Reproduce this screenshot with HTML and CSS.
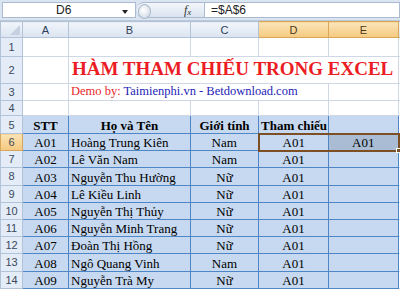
FILE: index.html
```html
<!DOCTYPE html>
<html lang="vi">
<head>
  <meta charset="UTF-8">
  <title>Hàm tham chiếu trong Excel</title>
  <link rel="stylesheet" href="styles.css">
</head>
<body>
  <div class="formula-bar">
    <div class="name-box">
      <span class="cell-ref">D6</span>
      <span class="arrow"></span>
    </div>
    <div class="splitter"><span class="knob"></span></div>
    <div class="fx"><i>f</i><span>x</span></div>
    <div class="formula">=$A$6</div>
  </div>
  <table class="sheet">
    <colgroup>
      <col class="c-row">
      <col class="c-a">
      <col class="c-b">
      <col class="c-c">
      <col class="c-d">
      <col class="c-e">
      <col>
    </colgroup>
    <tr class="col-head">
      <th class="corner"><span class="tri"></span></th>
      <th>A</th>
      <th>B</th>
      <th>C</th>
      <th class="hl">D</th>
      <th class="hl">E</th>
      <th></th>
    </tr>
    <tr class="r1">
      <th class="row-head">1</th>
      <td></td><td></td><td></td><td></td><td></td><td></td>
    </tr>
    <tr class="r2">
      <th class="row-head">2</th>
      <td></td>
      <td colspan="4" class="title">HÀM THAM CHIẾU TRONG EXCEL</td>
      <td></td>
    </tr>
    <tr class="r3">
      <th class="row-head">3</th>
      <td></td>
      <td colspan="3" class="demo"><span class="red">Demo by: </span><span class="blue">Taimienphi.vn - Betdownload.com</span></td>
      <td></td><td></td>
    </tr>
    <tr class="r4">
      <th class="row-head">4</th>
      <td></td><td></td><td></td><td></td><td></td><td></td>
    </tr>
    <tr class="r5 tbl-head">
      <th class="row-head">5</th>
      <td class="t">STT</td>
      <td class="t">Họ và Tên</td>
      <td class="t">Giới tính</td>
      <td class="t">Tham chiếu</td>
      <td class="t"></td>
      <td></td>
    </tr>
    <tr class="data">
      <th class="row-head hl">6</th>
      <td class="t c">A01</td>
      <td class="t">Hoàng Trung Kiên</td>
      <td class="t c">Nam</td>
      <td class="t c sel sel-l">A01</td>
      <td class="t c sel sel-r range">A01<span class="handle"></span></td>
      <td></td>
    </tr>
    <tr class="data">
      <th class="row-head">7</th>
      <td class="t c">A02</td><td class="t">Lê Văn Nam</td><td class="t c">Nam</td><td class="t c">A01</td><td class="t"></td><td></td>
    </tr>
    <tr class="data">
      <th class="row-head">8</th>
      <td class="t c">A03</td><td class="t">Nguyễn Thu Hường</td><td class="t c">Nữ</td><td class="t c">A01</td><td class="t"></td><td></td>
    </tr>
    <tr class="data">
      <th class="row-head">9</th>
      <td class="t c">A04</td><td class="t">Lê Kiều Linh</td><td class="t c">Nữ</td><td class="t c">A01</td><td class="t"></td><td></td>
    </tr>
    <tr class="data">
      <th class="row-head">10</th>
      <td class="t c">A05</td><td class="t">Nguyễn Thị Thủy</td><td class="t c">Nữ</td><td class="t c">A01</td><td class="t"></td><td></td>
    </tr>
    <tr class="data">
      <th class="row-head">11</th>
      <td class="t c">A06</td><td class="t">Nguyễn Minh Trang</td><td class="t c">Nữ</td><td class="t c">A01</td><td class="t"></td><td></td>
    </tr>
    <tr class="data">
      <th class="row-head">12</th>
      <td class="t c">A07</td><td class="t">Đoàn Thị Hồng</td><td class="t c">Nữ</td><td class="t c">A01</td><td class="t"></td><td></td>
    </tr>
    <tr class="data">
      <th class="row-head">13</th>
      <td class="t c">A08</td><td class="t">Ngô Quang Vinh</td><td class="t c">Nam</td><td class="t c">A01</td><td class="t"></td><td></td>
    </tr>
    <tr class="data">
      <th class="row-head">14</th>
      <td class="t c">A09</td><td class="t">Nguyễn Trà My</td><td class="t c">Nữ</td><td class="t c">A01</td><td class="t"></td><td></td>
    </tr>
  </table>
</body>
</html>
```

FILE: styles.css
```css
* {
  box-sizing: border-box;
}
body {
  margin: 0;
  width: 400px;
  height: 289px;
  overflow: hidden;
  background: #fff;
  font-family: "Liberation Serif", serif;
}

/* formula bar */
.formula-bar {
  display: flex;
  align-items: stretch;
  height: 21px;
  background: #dbe5f1;
  border-bottom: 1px solid #b9c9da;
}
.name-box {
  width: 134px;
  margin: 2px 0 2px 2px;
  background: #fff;
  border: 1px solid #abbad0;
  display: flex;
  align-items: center;
  position: relative;
  font: 12px "Liberation Sans", sans-serif;
  color: #222;
}
.cell-ref {
  margin-left: 53px;
}
.arrow {
  position: absolute;
  right: 7px;
  top: 7px;
  border-left: 3px solid transparent;
  border-right: 3px solid transparent;
  border-top: 4px solid #222;
}
.splitter {
  width: 48px;
  margin: 2px 0;
  background: linear-gradient(#f4f7fb, #d9e3ef);
  border: 1px solid #abbad0;
  border-left: none;
  border-right: none;
  border-radius: 8px 0 0 8px;
  position: relative;
}
.knob {
  position: absolute;
  left: 2px;
  top: 1px;
  width: 13px;
  height: 15px;
  border-radius: 50%;
  background: radial-gradient(circle at 40% 40%, #ffffff, #c8d3e0);
  border: 1px solid #a9b8cc;
}
.fx {
  width: 20px;
  margin: 2px 0;
  background: linear-gradient(#f4f7fb, #d9e3ef);
  border-top: 1px solid #abbad0;
  border-bottom: 1px solid #abbad0;
  display: flex;
  align-items: center;
  font: italic 12px "Liberation Serif", serif;
  color: #333;
}
.fx span {
  font-size: 9px;
  margin-top: 3px;
}
.formula {
  flex: 1;
  margin: 2px 0;
  background: #fff;
  border: 1px solid #abbad0;
  padding-left: 6px;
  font: 12px "Liberation Sans", sans-serif;
  color: #222;
  display: flex;
  align-items: center;
}

/* grid */
.sheet {
  border-collapse: collapse;
  table-layout: fixed;
  width: 402px;
  font-size: 13px;
  color: #000;
}
.c-row { width: 22px; }
.c-a { width: 46px; }
.c-b { width: 122px; }
.c-c { width: 68px; }
.c-d { width: 70px; }
.c-e { width: 70px; }

.sheet td {
  border: 1px solid #d0d7e5;
  padding: 0 2px;
  white-space: nowrap;
  overflow: visible;
  vertical-align: bottom;
  line-height: 15px;
}
.col-head th {
  height: 16px;
  background: linear-gradient(#f1f5fb, #dae4f0);
  border: 1px solid #b3c3d7;
  font: 11px "Liberation Sans", sans-serif;
  color: #2c3e57;
  font-weight: normal;
  padding: 0;
}
.col-head th.hl {
  background: linear-gradient(#fbe5b9, #f5c97f);
  border-color: #d9a75a;
  color: #4a3a1c;
}
.corner {
  position: relative;
}
.tri {
  position: absolute;
  right: 2px;
  bottom: 2px;
  border-left: 10px solid transparent;
  border-bottom: 10px solid #c5d1e0;
}
.row-head {
  background: #e4ecf7;
  border: 1px solid #b3c3d7;
  font: 11px "Liberation Sans", sans-serif;
  color: #3a4a5e;
  font-weight: normal;
  padding: 0;
}
.row-head.hl {
  background: linear-gradient(#fbe3b5, #f5c87e);
  border-color: #d9a75a;
}

.r1 { height: 19px; }
.r2 { height: 27px; }
.r3 { height: 17px; }
.r4 { height: 15px; }
.r5 { height: 18px; }
.data { height: 17.2px; }

.sheet td.title {
  color: #ec1c24;
  font-weight: bold;
  font-size: 19px;
  padding: 0 0 2px 3px;
  line-height: 22px;
  vertical-align: middle;
}
.sheet td.demo {
  font-size: 12.5px;
  padding: 0 0 1px 2px;
}
.red { color: #e8282c; }
.blue { color: #2424b8; }

.sheet td.t {
  background: #c6d9f1;
  border: 1px solid #4f86c6;
}
.tbl-head td.t {
  font-weight: bold;
  text-align: center;
}
.sheet td.c {
  text-align: center;
}
.sheet td.sel {
  border-top: 2px solid #7d4f24;
  border-bottom: 2px solid #7d4f24;
}
.sheet td.sel-l {
  border-left: 2px solid #7d4f24;
}
.sheet td.sel-r {
  border-right: 2px solid #7d4f24;
  position: relative;
}
.sheet td.range {
  background: #a9bcd4;
}
.handle {
  position: absolute;
  right: -3px;
  bottom: -3px;
  width: 5px;
  height: 5px;
  background: #7d4f24;
  border: 1px solid #fff;
}
```
